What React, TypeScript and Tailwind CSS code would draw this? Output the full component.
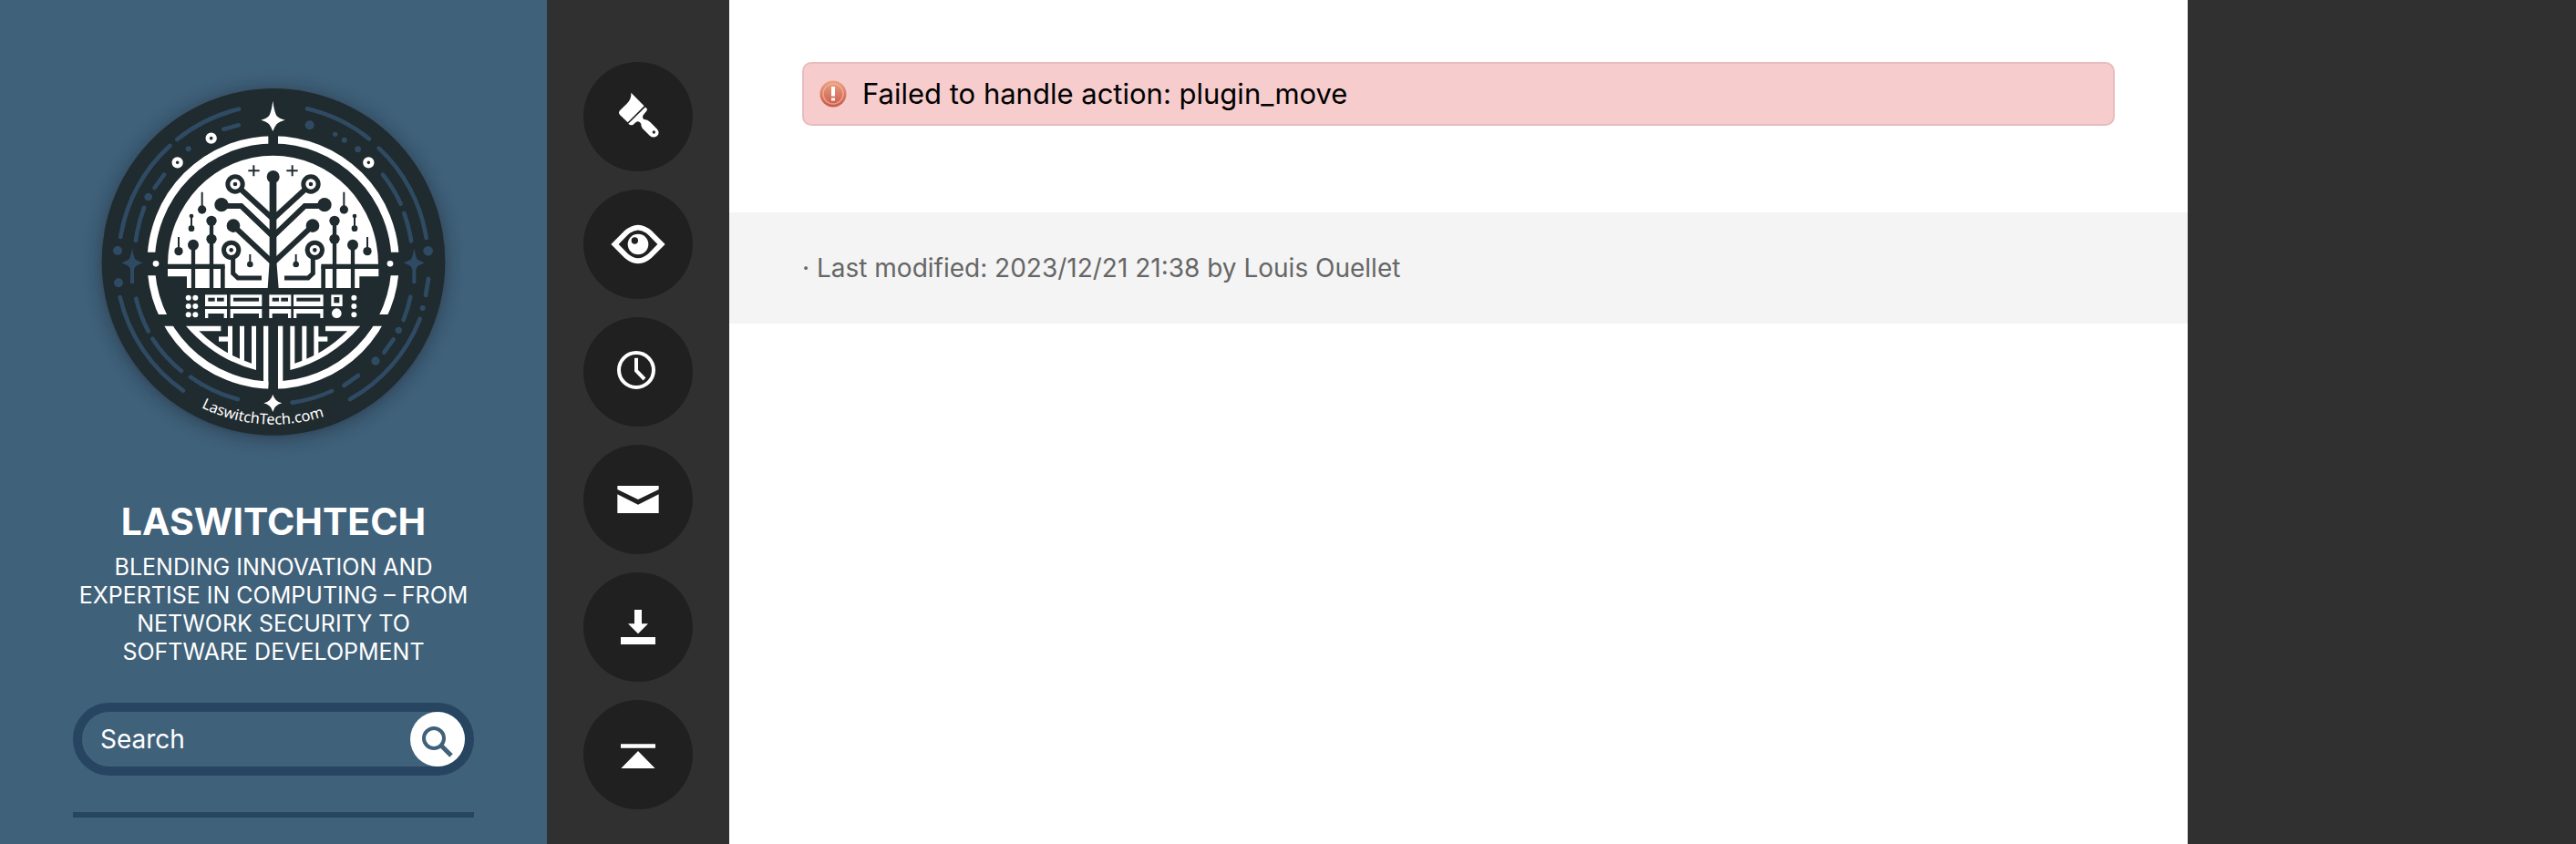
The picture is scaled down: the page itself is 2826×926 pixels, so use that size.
import type { ReactNode } from "react";

const INK = "#202b2f";
const MARK = "#2f4b63";

function LowerCircuit() {
  return (
    <g fill="#fff">
      <path d="M342 833H457V850H385Q460 925 558 956V833H573V978Q440 945 342 833Z" />
      <path d="M480 833H495V932L480 924Z" />
      <path d="M519 833H534V952L519 945Z" />
      <path d="M450 868H482V884H450Z" />
      <path d="M597 833H613V1030H597Z" />
    </g>
  );
}

function HalfTree() {
  return (
    <g>
      <g fill="none" stroke={INK} strokeWidth="18">
        <path d="M504 366L628 480" />
        <path d="M459 438H524L628 538" />
        <path d="M498 503L628 625" />
        <path d="M497 600V660L513 675H591" strokeWidth="15" />
        <path d="M366 566V708M426 487V708" strokeWidth="13" />
        <path d="M463 637V708" strokeWidth="14" />
        <path d="M282 637H470" strokeWidth="15" />
        <path d="M395 392V450M360 470V512M318 540V587M553 597V630" strokeWidth="6" />
        <path d="M547 322H584M565 304V340" strokeWidth="6" />
      </g>
      <g fill={INK}>
        <circle cx="504" cy="366" r="32" />
        <circle cx="459" cy="434" r="23" />
        <circle cx="498" cy="503" r="22" />
        <circle cx="491" cy="583" r="32" />
        <circle cx="366" cy="566" r="18" />
        <circle cx="426" cy="487" r="17" />
        <circle cx="426" cy="547" r="17" />
        <circle cx="395" cy="450" r="14" />
        <circle cx="360" cy="471" r="7" />
        <circle cx="360" cy="512" r="10" />
        <circle cx="318" cy="587" r="14" />
        <circle cx="553" cy="630" r="10" />
      </g>
      <g fill={INK} stroke="#fff" strokeWidth="10">
        <circle cx="504" cy="366" r="12" />
        <circle cx="491" cy="583" r="12" />
      </g>
    </g>
  );
}

function Module({ x, width, split }: { x: number; width: number; split?: boolean }) {
  return (
    <g>
      <path fill="#fff" d={`M${x} 730h${width}v38h${-width}z`} />
      <path fill={INK} d={`M${x + 10} 740h${width - 20}v12h${20 - width}z`} />
      {split && <path fill="#fff" d={`M${x + 32} 738h7v16h-7z`} />}
      <path fill="#fff" d={`M${x} 777h${width}v30h-10v-15h${20 - width}v15h-10z`} />
    </g>
  );
}

function SideStar() {
  return (
    <path
      fill={MARK}
      d="M165 578Q170 605 175 613Q180 618 200 625Q182 632 175 638Q171 642 171 650V693H159V650Q159 642 155 638Q148 632 130 625Q150 618 155 613Q160 605 165 578Z"
    />
  );
}

function Logo() {
  return (
    <svg
      viewBox="0 0 1260 1260"
      className="block h-[420px] w-[420px] overflow-visible"
      role="img"
      aria-label="LaswitchTech"
    >
      <defs>
        <clipPath id="ring-gaps">
          <path d="M200 190H613V590H200ZM645 190H1060V590H645ZM200 667H1060V795H200ZM200 833H613V1060H200ZM645 833H1060V1060H645Z" />
        </clipPath>
        <filter id="badge-shadow" x="-20%" y="-20%" width="140%" height="140%">
          <feGaussianBlur stdDeviation="28" />
        </filter>
        <path id="badge-arc" d="M392 1101A535 535 0 0 0 860 1105" />
      </defs>

      <ellipse cx="630" cy="628" rx="567" ry="573" fill="#12222f" opacity="0.55" filter="url(#badge-shadow)" />
      <ellipse cx="630" cy="622" rx="565" ry="571" fill={INK} />

      <g fill="none" stroke={MARK} strokeWidth="14" strokeLinecap="round">
        <path d="M313 219A513 513 0 0 1 516 119" />
        <path d="M289 240A511 511 0 0 0 127 540" />
        <path d="M466 185L515 172M270 335L239 378" />
        <path d="M204 444A460 460 0 0 0 177 552" />
        <path d="M125 738A518 518 0 0 0 333 1046" />
        <path d="M178 743A460 460 0 0 0 218 850" />
        <path d="M232 875A460 460 0 0 0 327 981" />
        <path d="M357 1001A467 467 0 0 0 513 1074" />
        <path d="M741 118A513 513 0 0 1 945 217" />
        <path d="M977 248A511 511 0 0 1 1133 543" />
        <path d="M990 335A460 460 0 0 1 1049 431" />
        <path d="M1060 462A460 460 0 0 1 1083 553" />
        <path d="M1140 678L1131 732M1025 877L994 920M909 996L862 1029" />
        <path d="M1081 737A460 460 0 0 1 1058 813" />
        <path d="M1112 810A518 518 0 0 1 882 1074" />
        <path d="M822 1047A460 460 0 0 1 692 1085" />
      </g>
      <g fill={MARK}>
        <circle cx="350" cy="250" r="9" />
        <circle cx="218" cy="408" r="13" />
        <circle cx="117" cy="585" r="15" />
        <circle cx="120" cy="691" r="15" />
        <circle cx="749" cy="172" r="15" />
        <circle cx="833" cy="202" r="8" />
        <circle cx="863" cy="221" r="9" />
        <circle cx="908" cy="251" r="10" />
        <circle cx="1139" cy="586" r="16" />
        <circle cx="1121" cy="774" r="9" />
        <circle cx="1042" cy="847" r="11" />
        <circle cx="966" cy="948" r="14" />
      </g>
      <SideStar />
      <g transform="translate(1258 0) scale(-1 1)">
        <SideStar />
      </g>

      <ellipse
        cx="629"
        cy="624"
        rx="402"
        ry="404"
        fill="none"
        stroke="#fff"
        strokeWidth="25"
        clipPath="url(#ring-gaps)"
      />
      <g fill={INK} stroke="#fff" strokeWidth="13">
        <circle cx="425" cy="215" r="12" />
        <circle cx="314" cy="295" r="12" />
        <circle cx="943" cy="295" r="12" />
      </g>
      <g fill="#fff">
        <circle cx="243" cy="628" r="10" />
        <circle cx="1014" cy="628" r="10" />
        <path d="M628 92Q633 130 641 142Q648 150 668 155Q648 161 641 168Q634 176 628 192Q622 176 615 168Q608 161 589 155Q608 150 615 142Q623 130 628 92Z" />
        <path d="M628 1058Q634 1081 658 1087Q634 1093 628 1116Q622 1093 598 1087Q622 1081 628 1058Z" />
      </g>

      <g fill="#fff">
        <path d="M282 630A346.500 358 0 0 1 975 630Z" />
        <path d="M463 629H796V708H463Z" />
        <path d="M282 645H463V708H345V670H282Z" />
        <path d="M976 645H796V708H913V670H976Z" />
      </g>
      <HalfTree />
      <g transform="translate(1257 0) scale(-1 1)">
        <HalfTree />
      </g>
      <path fill={INK} d="M617 342H640V620L647 709H611L617 620Z" />
      <circle cx="629" cy="342" r="21" fill={INK} />

      <Module x={405} width={72} split />
      <Module x={488} width={104} />
      <Module x={616} width={72} split />
      <Module x={696} width={98} />
      <g fill="#fff">
        {[740, 768, 796].map((y) => (
          <g key={y}>
            <circle cx="350" cy={y} r="9" />
            <circle cx="373" cy={y} r="9" />
            <circle cx="895" cy={y} r="9" />
          </g>
        ))}
        <path d="M820 730H857V768H820Z" />
        <circle cx="838" cy="791" r="16" />
      </g>
      <path fill={INK} d="M829 738H847V757H829Z" />

      <LowerCircuit />
      <g transform="translate(1258 0) scale(-1 1)">
        <LowerCircuit />
      </g>

      <text fill="#fff" fontSize="49" fontFamily="'Noto Sans', 'Open Sans', sans-serif">
        <textPath href="#badge-arc">LaswitchTech.com</textPath>
      </text>
    </svg>
  );
}

function Tool({ label, viewBox, children }: { label: string; viewBox: string; children: ReactNode }) {
  return (
    <li>
      <a href="#" aria-label={label} className="block size-[120px] rounded-full bg-[#202020]">
        <svg viewBox={viewBox} className="size-full" fill="#fff" aria-hidden="true">
          {children}
        </svg>
      </a>
    </li>
  );
}

function Tools() {
  return (
    <nav aria-label="Page tools" className="w-[200px] shrink-0 px-10 pt-[68px]">
      <ul className="flex flex-col gap-5">
        <Tool label="Edit" viewBox="120 84 360 360">
          <path d="M277 185L320 229L266 283L240 258Q234 251 240 244L263 221Q279 206 277 185Z" />
          <path
            fillRule="evenodd"
            d="M323 233Q332 236 329 244L317 259Q312 269 320 273Q331 273 340 282L363 305Q373 318 362 328Q350 336 338 326L314 302Q309 296 310 288Q305 277 294 281L284 290Q276 295 268 287ZM352 310A5 5 0 1 0 352 320A5 5 0 1 0 352 310Z"
          />
        </Tool>
        <Tool label="Show page" viewBox="120 504 360 360">
          <path
            fillRule="evenodd"
            d="M211 684L255 640Q300 600 345 640L389 684L345 728Q300 767 255 728ZM236 684L266 715Q300 745 334 715L364 684L334 653Q300 622 266 653Z"
          />
          <circle cx="300" cy="684" r="34" />
          <circle cx="289" cy="672" r="11" fill="#202020" />
        </Tool>
        <Tool label="Old revisions" viewBox="120 924 360 360">
          <g fill="none" stroke="#fff" strokeWidth="12">
            <circle cx="294" cy="1098" r="57" />
            <path d="M294 1058V1100L321 1128" />
          </g>
        </Tool>
        <Tool label="Contact" viewBox="120 84 360 360">
          <path d="M232 219H368V231L300 264L232 231ZM232 247L300 281L368 247V309H232Z" />
        </Tool>
        <Tool label="Download" viewBox="120 504 360 360">
          <path d="M288 627H312V673H333L300 706L267 673H288ZM243 717H357V741H243Z" />
        </Tool>
        <Tool label="Back to top" viewBox="120 924 360 360">
          <path d="M243 1069H357V1082H243ZM300 1092L356 1149H244Z" />
        </Tool>
      </ul>
    </nav>
  );
}

function Sidebar() {
  return (
    <aside className="flex w-[600px] shrink-0 flex-col bg-[#40617a] px-20 pt-20 text-white">
      <a href="#" className="self-center">
        <Logo />
      </a>
      <h1 className="mt-[46px] text-center text-[41px] leading-[52px] font-bold">LASWITCHTECH</h1>
      <p className="mt-[9px] text-center text-[25px] leading-[31px]">
        BLENDING INNOVATION AND
        <br />
        EXPERTISE IN COMPUTING – FROM
        <br />
        NETWORK SECURITY TO
        <br />
        SOFTWARE DEVELOPMENT
      </p>
      <form
        role="search"
        onSubmit={(event) => event.preventDefault()}
        className="mt-10 flex h-20 rounded-full border-[10px] border-[#274560]"
      >
        <input
          type="text"
          aria-label="Search"
          placeholder="Search"
          className="min-w-0 flex-1 bg-transparent pl-5 text-[28px] text-white outline-none placeholder:text-white placeholder:opacity-100"
        />
        <button type="submit" aria-label="Submit search" className="size-[60px] shrink-0 rounded-full bg-white">
          <svg viewBox="0 0 60 60" className="size-full" fill="none" stroke="#40617a" aria-hidden="true">
            <circle cx="26" cy="29" r="11" strokeWidth="4" />
            <path d="M34 37L45 48" strokeWidth="5" />
          </svg>
        </button>
      </form>
      <hr className="mt-10 mb-7 border-t-[6px] border-[#274560]" />
    </aside>
  );
}

function ErrorIcon() {
  return (
    <svg viewBox="0 0 32 32" className="size-8 shrink-0" aria-hidden="true">
      <defs>
        <linearGradient id="error-fill" x1="0" y1="0" x2="0" y2="1">
          <stop offset="0" stopColor="#eda283" />
          <stop offset="1" stopColor="#c9584a" />
        </linearGradient>
      </defs>
      <circle cx="16" cy="16" r="14.5" fill="url(#error-fill)" />
      <circle cx="16" cy="16" r="11" fill="none" stroke="#f3b9a0" strokeOpacity="0.7" strokeWidth="1.5" />
      <path d="M14 8H18V18.500H14ZM14 20.500H18V23.500H14Z" fill="#fff" />
    </svg>
  );
}

export default function App() {
  return (
    <div className="flex min-h-screen bg-[#303030] font-['Inter','Liberation_Sans',sans-serif]">
      <Sidebar />
      <Tools />
      <main className="max-w-[1600px] min-w-0 flex-1 bg-white">
        <div className="px-20 pt-[68px] pb-[95px]">
          <div
            role="alert"
            className="flex h-[70px] items-center gap-4 rounded-[10px] border-2 border-[#e8bcbc] bg-[#f6cccc] px-4 text-[31px] leading-10 text-black"
          >
            <ErrorIcon />
            Failed to handle action: plugin_move
          </div>
        </div>
        <footer className="bg-[#f4f4f4] px-20 py-[41px] text-[28px] leading-10 text-[#666]">
          · Last modified: 2023/12/21 21:38 by Louis Ouellet
        </footer>
      </main>
    </div>
  );
}
